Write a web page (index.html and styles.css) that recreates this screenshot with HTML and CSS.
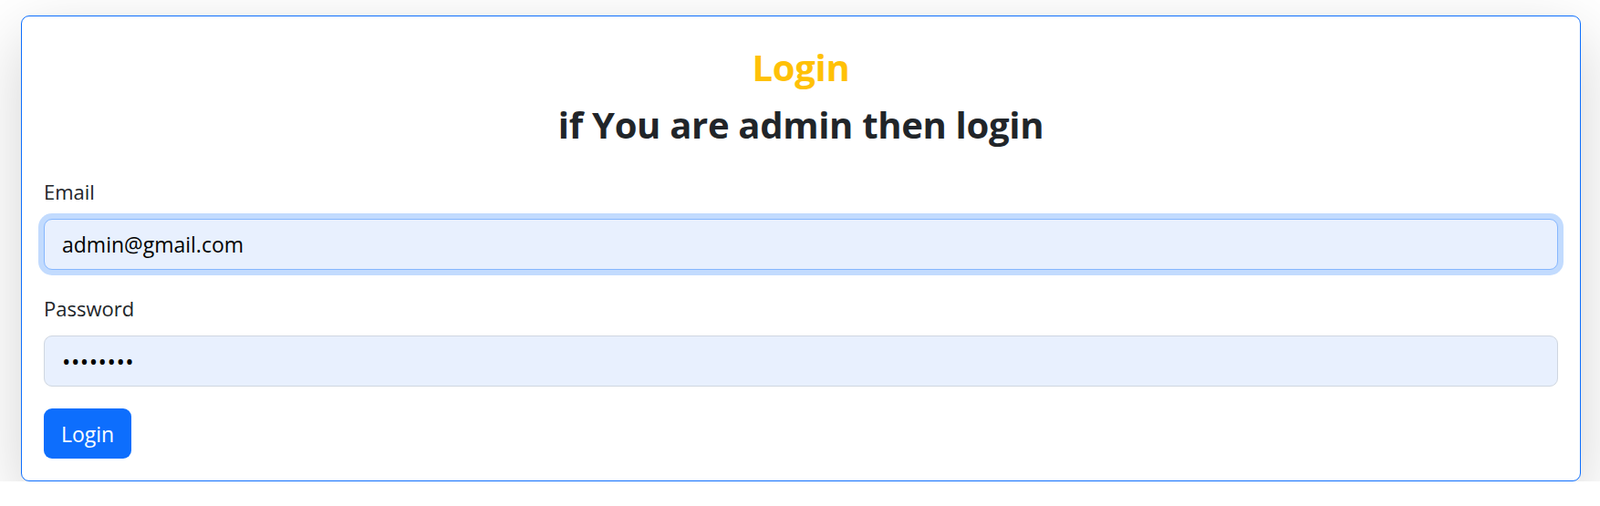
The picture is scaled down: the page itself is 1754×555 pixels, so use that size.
FILE: index.html
```html
<!DOCTYPE html>
<html lang="en">
<head>
<meta charset="utf-8">
<title>Admin Login</title>
<link rel="stylesheet" href="styles.css">
</head>
<body>
<div class="card">
  <h3 class="title title-warning">Login</h3>
  <h3 class="title">if You are admin then login</h3>
  <form class="form">
    <div class="group">
      <label class="label" for="email">Email</label>
      <input class="control control-focus" id="email" type="email" value="admin@gmail.com">
    </div>
    <div class="group">
      <label class="label" for="password">Password</label>
      <input class="control control-password" id="password" type="password" value="12345678">
    </div>
    <button class="btn" type="button">Login</button>
  </form>
</div>
</body>
</html>
```
FILE: styles.css
```css
* { box-sizing: border-box; }
html, body { margin: 0; padding: 0; background: #fff; }
body {
  font-family: "Open Sans", "Noto Sans", sans-serif;
  color: #212529;
  padding-top: 17px;
}
.card {
  margin: 0 21px 0 23px;
  border: 1px solid #0d6efd;
  border-radius: 9px;
  padding: 24px;
  background: #fff;
  box-shadow: 0 24px 72px rgba(0,0,0,.175);
}
.title {
  margin: 0;
  text-align: center;
  font-size: 40px;
  font-weight: 700;
  line-height: 50px;
  letter-spacing: -0.3px;
}
.title-warning { color: #ffc107; margin-top: 7px; margin-bottom: 13px; }
.form { margin-top: 30px; }
.group { margin-bottom: 24px; display: flex; flex-direction: column; }
.label {
  font-size: 22px;
  line-height: 36px;
  margin-bottom: 12px;
}
.control {
  height: 56px;
  width: 100%;
  border: 1px solid #cfd6e0;
  border-radius: 9px;
  background: #e8f0fe;
  padding: 0 19px;
  font-family: inherit;
  font-size: 23px;
  color: #000;
  outline: none;
}
.control-focus {
  border-color: #86b7fe;
  box-shadow: 0 0 0 6px #c2dbfe;
}
.control-password { font-size: 25px; letter-spacing: 0.5px; }
.btn {
  display: block;
  height: 55px;
  width: 96px;
  border: 0;
  border-radius: 9px;
  background: #0d6efd;
  color: #fff;
  font-family: inherit;
  font-size: 23px;
  padding: 0;
}
```
